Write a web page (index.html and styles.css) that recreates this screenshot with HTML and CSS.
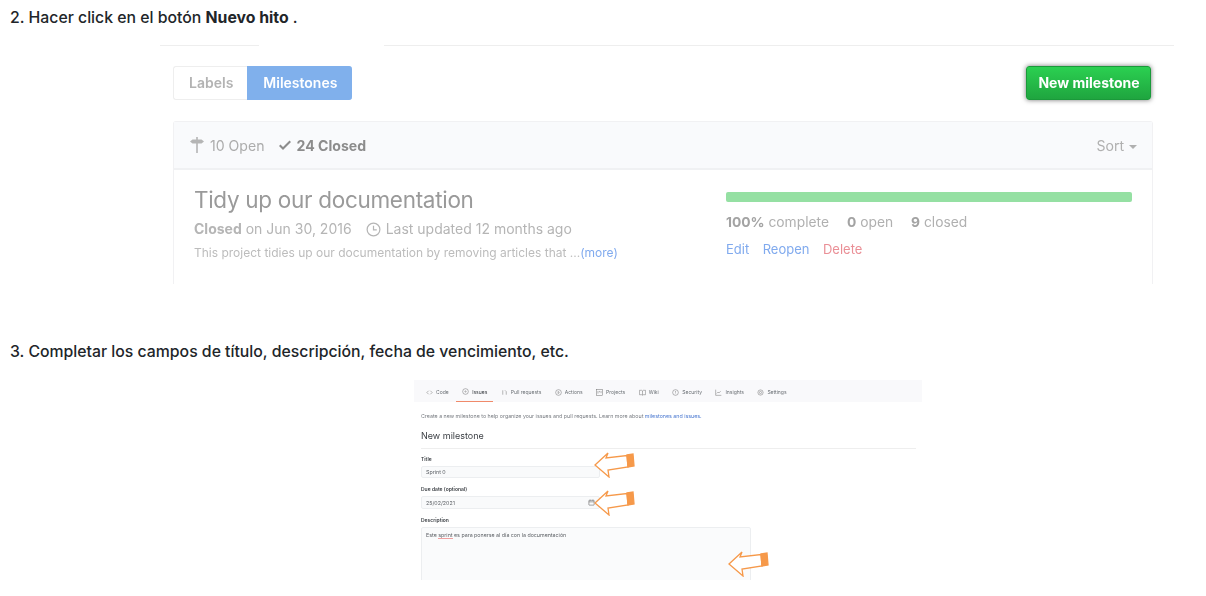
FILE: index.html
```html
<!DOCTYPE html>
<html lang="es">
<head>
  <meta charset="UTF-8" />
  <meta name="viewport" content="width=device-width, initial-scale=1.0"/>
  <title>Hitos</title>
  <link rel="stylesheet" href="styles.css">
</head>

<body>
  <p class="step step-first">2. Hacer click en el botón <strong>Nuevo hito</strong> .</p>

  <div class="shot-one">
    <div class="top-line">
      <span class="line line-a"></span>
      <span class="line line-b"></span>
    </div>
    <div class="shot-inner">
      <div class="toolbar">
        <div class="tabs">
          <span class="tab">Labels</span>
          <span class="tab tab-on">Milestones</span>
        </div>
        <button class="new-btn">New milestone</button>
      </div>

      <div class="box">
        <div class="box-head">
          <div class="states">
            <span class="state">
              <svg class="ico-sign" viewBox="0 0 14 16"><path d="M6.200 0h1.600v2.500h3.700L14 4.500l-2.500 2H7.800V16H6.200V6.500H2.500L0 4.500l2.500-2h3.700z"/></svg>
              10 Open
            </span>
            <span class="state state-on">
              <svg class="ico-check" viewBox="0 0 12 16"><path d="M12 5l-8 8-4-4 1.500-1.500L4 10l6.500-6.500z"/></svg>
              24 Closed
            </span>
          </div>
          <span class="sort">Sort <i class="caret"></i></span>
        </div>
        <div class="box-body">
          <div class="ms-left">
            <h3 class="ms-title">Tidy up our documentation</h3>
            <div class="ms-meta">
              <span><b>Closed</b> on Jun 30, 2016</span>
              <span class="updated">
                <svg class="ico-clock" viewBox="0 0 16 16"><circle cx="8" cy="8" r="6.800"/><path d="M8 4v4.300h3.500"/></svg>
                Last updated 12 months ago
              </span>
            </div>
            <p class="ms-desc">This project tidies up our documentation by removing articles that ...<a class="blue">(more)</a></p>
          </div>
          <div class="ms-right">
            <div class="bar"></div>
            <div class="counts">
              <span><b>100%</b> complete</span>
              <span><b>0</b> open</span>
              <span><b>9</b> closed</span>
            </div>
            <div class="actions">
              <a class="blue">Edit</a>
              <a class="blue">Reopen</a>
              <a class="red">Delete</a>
            </div>
          </div>
        </div>
      </div>
    </div>
  </div>

  <p class="step step-second">3. Completar los campos de título, descripción, fecha de vencimiento, etc.</p>

  <div class="shot-two">
    <nav class="repo-nav">
      <span class="rtab"><svg viewBox="0 0 16 16"><path d="M6 4L2 8l4 4M10 4l4 4-4 4"/></svg>Code</span>
      <span class="rtab rtab-on"><svg viewBox="0 0 16 16"><circle cx="8" cy="8" r="6.500"/><circle cx="8" cy="8" r="1.500"/></svg>Issues</span>
      <span class="rtab"><svg viewBox="0 0 16 16"><path d="M4 3v10M12 13V6L9 3"/></svg>Pull requests</span>
      <span class="rtab"><svg viewBox="0 0 16 16"><circle cx="8" cy="8" r="6.500"/><path d="M7 5.500L10 8l-3 2.500z"/></svg>Actions</span>
      <span class="rtab"><svg viewBox="0 0 16 16"><rect x="1.500" y="1.500" width="13" height="13"/><path d="M4.500 4.500v6M8 4.500v3M11.500 4.500v5"/></svg>Projects</span>
      <span class="rtab"><svg viewBox="0 0 16 16"><path d="M1 3h5l2 1.500L10 3h5v10h-5l-2 1-2-1H1zM8 4.500V14"/></svg>Wiki</span>
      <span class="rtab"><svg viewBox="0 0 16 16"><circle cx="8" cy="8" r="6.500"/><path d="M8 4.500v4M8 10.500v1"/></svg>Security</span>
      <span class="rtab"><svg viewBox="0 0 16 16"><path d="M1.500 1.500v13h13M4 10l3-3 2 2 4-4"/></svg>Insights</span>
      <span class="rtab"><svg viewBox="0 0 16 16"><circle cx="8" cy="8" r="6"/><circle cx="8" cy="8" r="2.500"/></svg>Settings</span>
    </nav>
    <div class="form">
      <p class="form-note">Create a new milestone to help organize your issues and pull requests. Learn more about <a class="form-link">milestones and issues.</a></p>
      <h4 class="form-title">New milestone</h4>
      <label class="form-label">Title</label>
      <div class="field field-title">Sprint 0</div>
      <label class="form-label">Due date (optional)</label>
      <div class="field field-date">25/02/2021
        <svg class="ico-cal" viewBox="0 0 16 16"><rect x="2" y="3" width="12" height="11" rx="1"/><path d="M2 6.500h12M5 1.500v2M11 1.500v2"/></svg>
      </div>
      <label class="form-label">Description</label>
      <div class="field field-desc">Este <span class="typo">sprint</span> es para ponerse al día con la documentación</div>
    </div>

    <svg class="arrow arrow-1" viewBox="0 0 42 26"><polygon points="1,13 14,1 12,6 33,3.500 34,15 14,18 15,25"/><polygon class="arrow-tail" points="33,3 39,2 40,14 34,15"/></svg>
    <svg class="arrow arrow-2" viewBox="0 0 42 26"><polygon points="1,13 14,1 12,6 33,3.500 34,15 14,18 15,25"/><polygon class="arrow-tail" points="33,3 39,2 40,14 34,15"/></svg>
    <svg class="arrow arrow-3" viewBox="0 0 42 26"><polygon points="1,13 14,1 12,6 33,3.500 34,15 14,18 15,25"/><polygon class="arrow-tail" points="33,3 39,2 40,14 34,15"/></svg>
  </div>
</body>
</html>
```

FILE: styles.css
```css
body {
  margin: 0;
  background: #fff;
  font-family: Inter, "Liberation Sans", sans-serif;
  color: #a3a3a3;
}

.step {
  margin: 0;
  padding-left: 10px;
  font-family: Inter, "Liberation Sans", sans-serif;
  font-size: 15.800px;
  font-weight: 500;
  line-height: 20px;
  color: #212529;
}

.step strong {
  font-weight: 700;
}

.step-first {
  padding-top: 8px;
}

.step-second {
  margin-top: 42px;
}

/* first picture */
.shot-one {
  height: 255px;
  margin-top: 17px;
  margin-left: 160px;
  width: 1014px;
  filter: blur(.3px);
}

.top-line {
  display: flex;
  height: 1px;
}

.line {
  height: 1px;
  background: #eeeeee;
}

.line-a {
  width: 99px;
}

.line-b {
  width: 790px;
  margin-left: 125px;
}

.shot-inner {
  margin: 0 21px 0 13px;
  padding-top: 20px;
}

.toolbar {
  display: flex;
  justify-content: space-between;
  height: 34px;
}

.tabs {
  display: flex;
  font-size: 14px;
  font-weight: 600;
  line-height: 32px;
}

.tab {
  padding: 0 14px 0 15px;
  border: 1px solid #eeeeee;
  border-right: 0;
  border-radius: 3px 0 0 3px;
  color: #b3b3b3;
}

.tab-on {
  padding: 0 15px;
  background: #80b0ec;
  border-color: #80b0ec;
  border-radius: 0 3px 3px 0;
  color: #fff;
}

.new-btn {
  width: 125px;
  margin-right: 2px;
  padding: 0 0 2px 1px;
  border: 1px solid #1a9a3a;
  border-radius: 3px;
  background: linear-gradient(#2bd051, #1fa53f);
  box-shadow: 0 0 5px rgba(0, 0, 0, .55);
  color: #fff;
  font-family: inherit;
  font-size: 14px;
  font-weight: 700;
}

.box {
  margin-top: 21px;
  height: 162px;
  border: 1px solid #f1f1f3;
  border-bottom: 0;
  border-radius: 3px 3px 0 0;
}

.box-head {
  display: flex;
  justify-content: space-between;
  align-items: center;
  height: 46px;
  padding: 0 15px 0 16px;
  background: #f9fafc;
  border-bottom: 2px solid #f0f1f3;
  font-size: 14.100px;
}

.states {
  display: flex;
  gap: 14px;
}

.state {
  display: flex;
  align-items: center;
  gap: 6px;
  color: #acacac;
}

.state-on {
  color: #8c8c8c;
  font-weight: 700;
}

.ico-sign {
  width: 14px;
  height: 16px;
  fill: #b5b5b5;
}

.ico-check {
  width: 12px;
  height: 16px;
  fill: #8c8c8c;
}

.sort {
  color: #b0b0b0;
}

.caret {
  display: inline-block;
  margin-left: 1px;
  vertical-align: 2px;
  border: 4px solid transparent;
  border-top-color: #b0b0b0;
  border-bottom: 0;
}

.box-body {
  display: flex;
  justify-content: space-between;
  padding: 15px 20px 0;
}

.ms-title {
  margin: 0;
  font-size: 22.500px;
  font-weight: 400;
  letter-spacing: -.3px;
  line-height: 29px;
  color: #9a9a9a;
}

.ms-meta {
  display: flex;
  gap: 14px;
  margin-top: 6px;
  font-size: 14px;
  line-height: 18px;
  color: #b5b5b5;
}

.updated {
  display: flex;
  align-items: center;
  gap: 5px;
}

.ico-clock {
  width: 15px;
  height: 15px;
  fill: none;
  stroke: #b5b5b5;
  stroke-width: 1.300;
}

.ms-desc {
  margin: 7px 0 0;
  font-size: 12px;
  line-height: 16px;
  color: #bcbcbc;
}

.blue {
  color: #80aaee;
}

.red {
  color: #ea8f96;
}

.ms-right {
  width: 406px;
}

.bar {
  height: 10px;
  margin-top: 7px;
  border-radius: 2px;
  background: #95e0a3;
}

.counts {
  display: flex;
  gap: 18px;
  margin-top: 11px;
  font-size: 13.800px;
  line-height: 18px;
  color: #b0b0b0;
}

.counts b {
  color: #a3a3a3;
}

.actions {
  display: flex;
  gap: 13.500px;
  margin-top: 9px;
  font-size: 13px;
  line-height: 18px;
}

/* second picture */
.shot-two {
  position: relative;
  height: 200px;
  width: 508px;
  margin-top: 18px;
  margin-left: 414px;
  overflow: hidden;
  font-size: 5.300px;
  color: #55595e;
  filter: blur(.3px);
}

.repo-nav {
  display: flex;
  height: 22px;
  padding-left: 6px;
  background: #f9f9fb;
  font-size: 5px;
}

.rtab {
  display: flex;
  align-items: center;
  gap: 3px;
  padding: 2px 6px 0;
  margin-right: 1.500px;
  color: #6a6f74;
}

.rtab svg {
  width: 7px;
  height: 7px;
  fill: none;
  stroke: #777;
  stroke-width: 1.200;
}

.rtab-on {
  border-bottom: 1px solid #f08a6a;
  color: #33373c;
}

.form {
  padding: 11px 6px 0 7px;
}

.form-note {
  margin: 0;
  line-height: 7px;
  font-size: 5.300px;
  color: #777b80;
}

.form-link {
  color: #4a78d0;
}

.form-title {
  margin: 10px 0 0;
  padding-bottom: 7px;
  border-bottom: 1px solid #eeeeee;
  font-size: 9px;
  font-weight: 400;
  line-height: 11px;
  color: #3a3e43;
}

.form-label {
  display: block;
  margin-top: 7px;
  line-height: 7px;
  font-weight: 600;
  font-size: 5px;
  color: #3a3e43;
}

.field {
  box-sizing: border-box;
  margin-top: 3px;
  padding: 0 4px;
  background: #f9fafb;
  border: 1px solid #eceef0;
  border-radius: 2px;
  line-height: 10px;
  color: #5a5e63;
}

.field + .form-label {
  margin-top: 8px;
}

.field-title {
  width: 179px;
  height: 12px;
}

.field-date {
  display: flex;
  justify-content: space-between;
  align-items: center;
  width: 179px;
  height: 13px;
}

.ico-cal {
  width: 7px;
  height: 7px;
  fill: none;
  stroke: #555;
  stroke-width: 1.200;
}

.field-desc {
  width: 330px;
  height: 70px;
  padding-top: 2px;
  background: #fafbfc;
}

.typo {
  border-bottom: 1px solid #f0a0a0;
}

.arrow {
  position: absolute;
  width: 42px;
  height: 26px;
  fill: #fff;
  stroke: #f6994a;
  stroke-width: 1.300;
}

.arrow-tail {
  fill: #f6994a;
}

.arrow-1 {
  left: 180px;
  top: 72px;
}

.arrow-2 {
  left: 180px;
  top: 110px;
}

.arrow-3 {
  left: 314px;
  top: 171px;
}
```
